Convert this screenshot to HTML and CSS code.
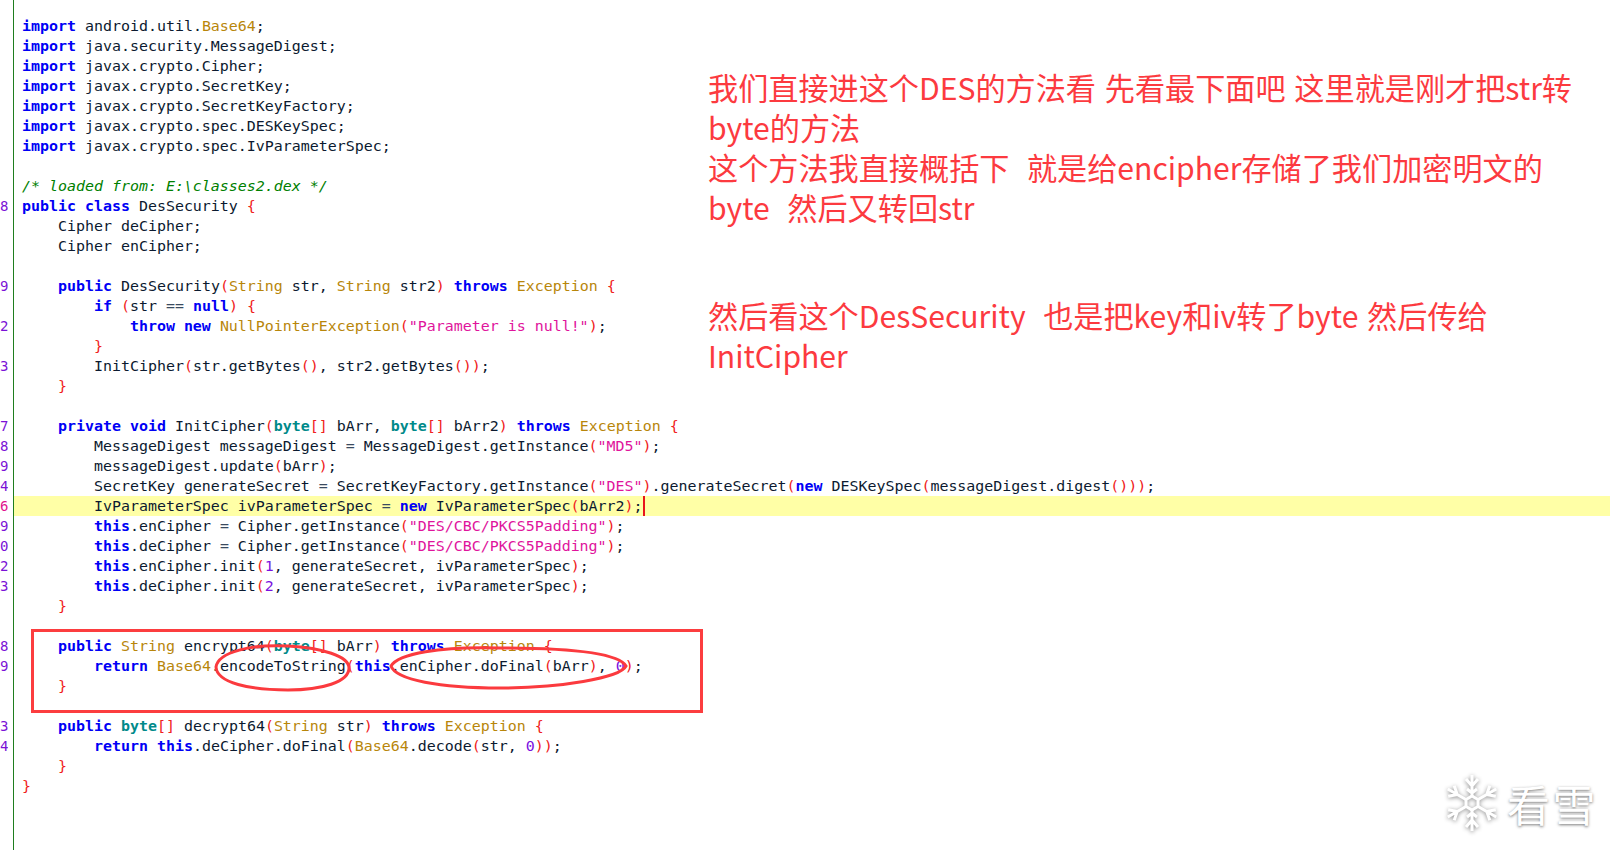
FILE: index.html
```html
<!DOCTYPE html>
<html lang="zh">
<head>
<meta charset="utf-8">
<title>DesSecurity</title>
<link rel="stylesheet" href="styles.css">
</head>
<body>
<main class="editor">
<div class="gutter">
<div class="num"></div><div class="num"></div><div class="num"></div><div class="num"></div><div class="num"></div><div class="num"></div><div class="num"></div><div class="num"></div><div class="num"></div>
<div class="num">8</div><div class="num"></div><div class="num"></div><div class="num"></div>
<div class="num">9</div><div class="num"></div><div class="num">2</div><div class="num"></div><div class="num">3</div><div class="num"></div><div class="num"></div>
<div class="num">7</div><div class="num">8</div><div class="num">9</div><div class="num">4</div><div class="num hot">6</div><div class="num">9</div><div class="num">0</div><div class="num">2</div><div class="num">3</div><div class="num"></div><div class="num"></div>
<div class="num">8</div><div class="num">9</div><div class="num"></div><div class="num"></div>
<div class="num">3</div><div class="num">4</div>
</div>
<div class="code">
<div class="line"><b class="k">import</b> android.util.<span class="t">Base64</span>;</div>
<div class="line"><b class="k">import</b> java.security.MessageDigest;</div>
<div class="line"><b class="k">import</b> javax.crypto.Cipher;</div>
<div class="line"><b class="k">import</b> javax.crypto.SecretKey;</div>
<div class="line"><b class="k">import</b> javax.crypto.SecretKeyFactory;</div>
<div class="line"><b class="k">import</b> javax.crypto.spec.DESKeySpec;</div>
<div class="line"><b class="k">import</b> javax.crypto.spec.IvParameterSpec;</div>
<div class="line"></div>
<div class="line"><i class="c">/* loaded from: E:\classes2.dex */</i></div>
<div class="line"><b class="k">public class</b> DesSecurity <span class="p">{</span></div>
<div class="line">    Cipher deCipher;</div>
<div class="line">    Cipher enCipher;</div>
<div class="line"></div>
<div class="line">    <b class="k">public</b> DesSecurity<span class="p">(</span><span class="t">String</span> str, <span class="t">String</span> str2<span class="p">)</span> <b class="k">throws</b> <span class="t">Exception</span> <span class="p">{</span></div>
<div class="line">        <b class="k">if</b> <span class="p">(</span>str <span class="o">==</span> <b class="k">null</b><span class="p">)</span> <span class="p">{</span></div>
<div class="line">            <b class="k">throw new</b> <span class="t">NullPointerException</span><span class="p">(</span><span class="s">"Parameter is null!"</span><span class="p">)</span>;</div>
<div class="line">        <span class="p">}</span></div>
<div class="line">        InitCipher<span class="p">(</span>str.getBytes<span class="p">()</span>, str2.getBytes<span class="p">())</span>;</div>
<div class="line">    <span class="p">}</span></div>
<div class="line"></div>
<div class="line">    <b class="k">private void</b> InitCipher<span class="p">(</span><b class="b">byte</b><span class="p">[]</span> bArr, <b class="b">byte</b><span class="p">[]</span> bArr2<span class="p">)</span> <b class="k">throws</b> <span class="t">Exception</span> <span class="p">{</span></div>
<div class="line">        MessageDigest messageDigest <span class="o">=</span> MessageDigest.getInstance<span class="p">(</span><span class="s">"MD5"</span><span class="p">)</span>;</div>
<div class="line">        messageDigest.update<span class="p">(</span>bArr<span class="p">)</span>;</div>
<div class="line">        SecretKey generateSecret <span class="o">=</span> SecretKeyFactory.getInstance<span class="p">(</span><span class="s">"DES"</span><span class="p">)</span>.generateSecret<span class="p">(</span><b class="k">new</b> DESKeySpec<span class="p">(</span>messageDigest.digest<span class="p">()))</span>;</div>
<div class="line current">        IvParameterSpec ivParameterSpec <span class="o">=</span> <b class="k">new</b> IvParameterSpec<span class="p">(</span>bArr2<span class="p">)</span>;<span class="caret"></span></div>
<div class="line">        <b class="k">this</b>.enCipher <span class="o">=</span> Cipher.getInstance<span class="p">(</span><span class="s">"DES/CBC/PKCS5Padding"</span><span class="p">)</span>;</div>
<div class="line">        <b class="k">this</b>.deCipher <span class="o">=</span> Cipher.getInstance<span class="p">(</span><span class="s">"DES/CBC/PKCS5Padding"</span><span class="p">)</span>;</div>
<div class="line">        <b class="k">this</b>.enCipher.init<span class="p">(</span><span class="n">1</span>, generateSecret, ivParameterSpec<span class="p">)</span>;</div>
<div class="line">        <b class="k">this</b>.deCipher.init<span class="p">(</span><span class="n">2</span>, generateSecret, ivParameterSpec<span class="p">)</span>;</div>
<div class="line">    <span class="p">}</span></div>
<div class="line"></div>
<div class="line">    <b class="k">public</b> <span class="t">String</span> encrypt64<span class="p">(</span><b class="b">byte</b><span class="p">[]</span> bArr<span class="p">)</span> <b class="k">throws</b> <span class="t">Exception</span> <span class="p">{</span></div>
<div class="line">        <b class="k">return</b> <span class="t">Base64</span>.encodeToString<span class="p">(</span><b class="k">this</b>.enCipher.doFinal<span class="p">(</span>bArr<span class="p">)</span>, <span class="n">0</span><span class="p">)</span>;</div>
<div class="line">    <span class="p">}</span></div>
<div class="line"></div>
<div class="line">    <b class="k">public</b> <b class="b">byte</b><span class="p">[]</span> decrypt64<span class="p">(</span><span class="t">String</span> str<span class="p">)</span> <b class="k">throws</b> <span class="t">Exception</span> <span class="p">{</span></div>
<div class="line">        <b class="k">return</b> <b class="k">this</b>.deCipher.doFinal<span class="p">(</span><span class="t">Base64</span>.decode<span class="p">(</span>str, <span class="n">0</span><span class="p">))</span>;</div>
<div class="line">    <span class="p">}</span></div>
<div class="line"><span class="p">}</span></div>
</div>
</main>

<div class="redbox"></div>
<svg class="rings" width="1610" height="850" viewBox="0 0 1610 850" aria-hidden="true">
<path d="M216 667 C218 652 252 644 288 646 C322 648 349 656 349 668 C349 682 322 690 288 690 C250 690 217 683 216 667 Z"/>
<path d="M391 666 C398 654 440 646 500 648 C560 648 618 652 626 666 C620 678 560 688 500 688 C440 688 396 680 391 666 Z"/>
</svg>

<section class="note note-top">
<p>我们直接进这个DES的方法看 先看最下面吧 这里就是刚才把str转</p>
<p>byte的方法</p>
<p>这个方法我直接概括下&nbsp; 就是给encipher存储了我们加密明文的</p>
<p>byte&nbsp; 然后又转回str</p>
</section>
<section class="note note-bottom">
<p>然后看这个DesSecurity&nbsp; 也是把key和iv转了byte 然后传给</p>
<p>InitCipher</p>
</section>

<div class="mark">
<svg class="flake" width="60" height="60" viewBox="-30 -30 60 60" aria-hidden="true">
<path class="arm" d="M0 -7V-28M-6 -24L0 -17L6 -24M-5 -14L0 -10L5 -14"/>
<path class="arm" transform="rotate(60)" d="M0 -7V-28M-6 -24L0 -17L6 -24"/>
<path class="arm" transform="rotate(120)" d="M0 -7V-28M-6 -24L0 -17L6 -24"/>
<path class="arm" transform="rotate(180)" d="M0 -7V-28M-6 -24L0 -17L6 -24M-5 -14L0 -10L5 -14"/>
<path class="arm" transform="rotate(240)" d="M0 -7V-28M-6 -24L0 -17L6 -24"/>
<path class="arm" transform="rotate(300)" d="M0 -7V-28M-6 -24L0 -17L6 -24"/>
<path class="arm" d="M0 -7L6 -3.500V3.500L0 7L-6 3.500V-3.500Z"/>
</svg>
<span class="mark-text">看雪</span>
</div>
</body>
</html>
```
FILE: styles.css
```css
html, body {
  margin: 0;
  padding: 0;
  background: #fff;
  height: 850px;
  overflow: hidden;
}

.editor {
  display: flex;
  height: 850px;
  font-family: "DejaVu Sans Mono", "Liberation Mono", monospace;
  font-size: 14.95px;
  line-height: 21px;
  color: #0c1a30;
}

.gutter {
  flex: 0 0 13px;
  box-sizing: content-box;
  padding-top: 16px;
  border-right: 1.5px solid #1f7d1f;
  overflow: hidden;
}

.num {
  height: 20px;
  width: 8px;
  overflow: hidden;
  color: #7b12d6;
  font-size: 14px;
  text-align: right;
}

.num.hot { color: #e0148c; }

.code {
  flex: 1;
  padding-top: 16px;
}

.line {
  height: 20px;
  padding-left: 8px;
  white-space: pre;
}

.line.current { background: #ffffa6; }

.caret {
  display: inline-block;
  width: 2px;
  height: 20px;
  background: #e8141c;
  vertical-align: top;
}

.k { color: #0000f5; font-weight: 700; }
.b { color: #008a8a; font-weight: 700; }
.t { color: #b8860b; }
.p { color: #f02020; }
.s { color: #e0149c; }
.n { color: #7a10e0; }
.o { color: #3a4a60; }
.c { color: #008000; font-style: italic; }

.redbox {
  position: absolute;
  left: 31px;
  top: 629px;
  width: 666px;
  height: 78px;
  border: 3px solid #fc3d3f;
}

.rings {
  position: absolute;
  left: 0;
  top: 0;
}

.rings path {
  fill: none;
  stroke: #fb3a3e;
  stroke-width: 3;
}

.note {
  position: absolute;
  left: 708px;
  font-family: "Noto Sans CJK SC", sans-serif;
  font-size: 30.15px;
  word-spacing: 2px;
  line-height: 40px;
  color: #fc3a3f;
  white-space: nowrap;
}

.note p { margin: 0; }
.note-top { top: 67px; }
.note-bottom { top: 295px; }

.mark {
  position: absolute;
  left: 1442px;
  top: 773px;
  display: flex;
  align-items: center;
  gap: 5px;
  height: 60px;
}

.flake {
  filter: drop-shadow(0 1px 2px rgba(0, 0, 0, .45));
}

.arm {
  fill: none;
  stroke: #fff;
  stroke-width: 3;
}

.mark-text {
  font-family: "Noto Sans CJK SC", sans-serif;
  font-size: 43px;
  letter-spacing: 2.500px;
  color: #fff;
  text-shadow: 0 1px 3px rgba(0, 0, 0, .55);
}
```
